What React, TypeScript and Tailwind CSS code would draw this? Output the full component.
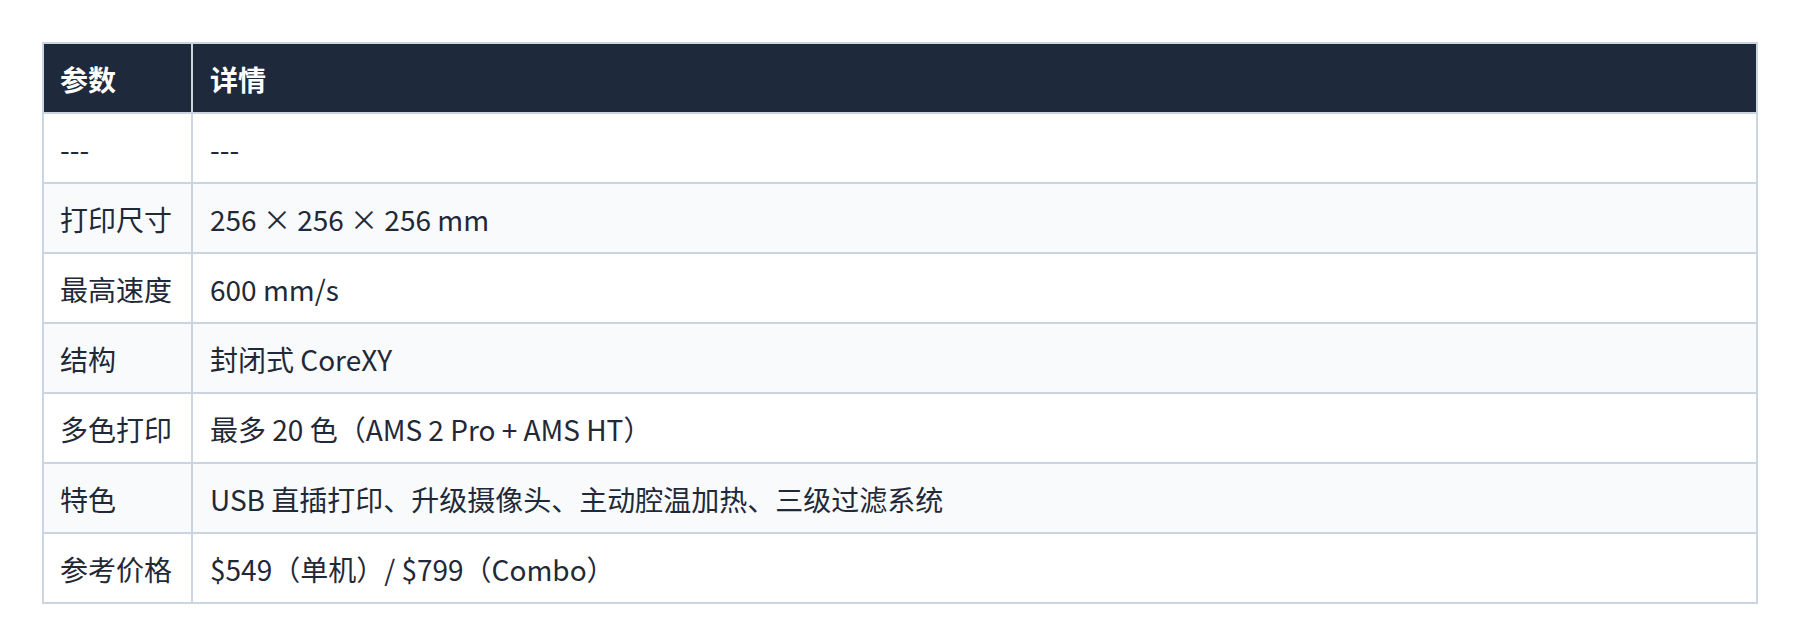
import React from "react";

const rows: [string, string][] = [
  ["---", "---"],
  ["打印尺寸", "256 × 256 × 256 mm"],
  ["最高速度", "600 mm/s"],
  ["结构", "封闭式 CoreXY"],
  ["多色打印", "最多 20 色（AMS 2 Pro + AMS HT）"],
  ["特色", "USB 直插打印、升级摄像头、主动腔温加热、三级过滤系统"],
  ["参考价格", "$549（单机）/ $799（Combo）"],
];

export default function App() {
  return (
    <div
      className="min-h-[644px] bg-white px-[42px] pt-[42px]"
      style={{ fontFamily: '"Noto Sans CJK SC", "Noto Sans", sans-serif' }}
    >
      <table className="w-full border-collapse border-2 border-[#cbd5e1] text-[28px] leading-[42px] text-[#1f2937]">
        <thead>
          <tr className="bg-[#1e293b] text-white">
            <th className="h-[70px] whitespace-nowrap border-2 border-[#cbd5e1] pl-4 pr-[19px] pt-[1px] text-left font-bold">参数</th>
            <th className="h-[70px] border-2 border-[#cbd5e1] pl-[17px] pr-4 pt-[1px] text-left font-bold">详情</th>
          </tr>
        </thead>
        <tbody>
          {rows.map(([k, v], i) => (
            <tr key={i} className={i % 2 === 1 ? "bg-[#f8fafc]" : "bg-white"}>
              <td className="h-[70px] w-[1px] whitespace-nowrap border-2 border-[#cbd5e1] pl-4 pr-[19px] pt-[1px]">{k}</td>
              <td className="h-[70px] border-2 border-[#cbd5e1] pl-[17px] pr-4 pt-[1px]">{v}</td>
            </tr>
          ))}
        </tbody>
      </table>
    </div>
  );
}
